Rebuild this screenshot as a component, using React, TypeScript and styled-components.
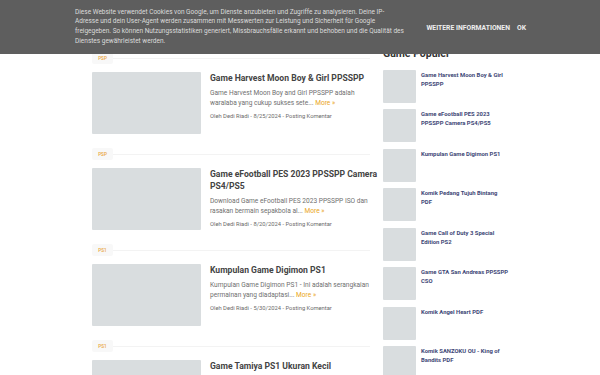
import React from 'react';
import styled, { createGlobalStyle } from 'styled-components';

const GlobalStyle = createGlobalStyle`
  html, body {
    margin: 0;
    padding: 0;
    background: #fff;
    font-family: Roboto, "Liberation Sans", sans-serif;
    overflow: hidden;
  }
`;

const Page = styled.div`
  display: flex;
  gap: 5px;
  width: 423px;
  padding: 47px 0 0 92px;
`;

const Main = styled.main`
  width: 286px;
  padding-top: 5px;
`;

const Post = styled.article`
  margin-bottom: 14px;
`;

const TagRow = styled.div`
  display: flex;
  align-items: center;
  height: 12px;
  margin-bottom: 8px;

  &::after {
    content: '';
    flex: 1;
    height: 1px;
    margin-right: 8px;
    background: #f3f3f3;
  }
`;

const Tag = styled.span`
  display: inline-flex;
  align-items: center;
  justify-content: center;
  width: 21px;
  height: 12px;
  background: #f8f8f8;
  color: #e9a53c;
  font-size: 4.6px;
  font-weight: 500;
  border-radius: 2px;
`;

const PostBody = styled.div`
  display: flex;
  gap: 9px;
`;

const Thumb = styled.div<{ $size?: 'big' | 'small' }>`
  flex: none;
  width: ${(p) => (p.$size === 'small' ? '33px' : '109px')};
  height: ${(p) => (p.$size === 'small' ? '33px' : '62px')};
  background: #d9dddf;
  border-radius: 1px;
`;

const PostText = styled.div`
  flex: 1;
  min-width: 0;
`;

const PostTitle = styled.h2`
  margin: 0 0 4px;
  font-size: 8.6px;
  line-height: 12px;
  font-weight: 700;
  color: #444;
`;

const Snippet = styled.p`
  margin: 0 0 4px;
  padding-right: 8px;
  font-size: 6.6px;
  line-height: 10px;
  color: #6f6f6f;
`;

const More = styled.a`
  color: #eaa520;
  text-decoration: none;
`;

const Meta = styled.div`
  font-size: 5.8px;
  line-height: 9px;
  color: #6a6a6a;
`;

const Sidebar = styled.aside`
  width: 132px;
`;

const SideHeading = styled.h3`
  margin: 0 0 8.5px;
  font-size: 10.5px;
  line-height: 14px;
  font-weight: 700;
  color: #333;
`;

const PopularItem = styled.div`
  display: flex;
  gap: 5px;
  margin-bottom: 6.5px;
`;

const PopularTitle = styled.a`
  width: 87.5px;
  padding-top: 1px;
  font-size: 5.9px;
  line-height: 9px;
  font-weight: 700;
  color: #3e4776;
  text-decoration: none;
`;

const CookieBar = styled.div`
  position: fixed;
  top: 0;
  left: 0;
  right: 0;
  height: 54px;
  display: flex;
  align-items: center;
  justify-content: space-between;
  padding: 0 74px 0 75px;
  background: #5e5e5e;
  box-sizing: border-box;
`;

const CookieText = styled.p`
  width: 330px;
  margin: 0;
  font-size: 6.5px;
  line-height: 9.6px;
  color: #dcdcdc;
`;

const CookieActions = styled.div`
  display: flex;
  gap: 7px;
  padding-top: 1px;
`;

const CookieButton = styled.span`
  font-size: 6.8px;
  font-weight: 700;
  color: #eee;
`;

const posts = [
  {
    tag: 'PSP',
    title: 'Game Harvest Moon Boy & Girl PPSSPP',
    snippet: 'Game Harvest Moon Boy and Girl PPSSPP adalah waralaba yang cukup sukses sete...',
    date: '8/25/2024',
  },
  {
    tag: 'PSP',
    title: 'Game eFootball PES 2023 PPSSPP Camera PS4/PS5',
    snippet: 'Download Game eFootball PES 2023 PPSSPP ISO dan rasakan bermain sepakbola al...',
    date: '8/20/2024',
  },
  {
    tag: 'PS1',
    title: 'Kumpulan Game Digimon PS1',
    snippet: 'Kumpulan Game Digimon PS1 - Ini adalah serangkaian permainan yang diadaptasi...',
    date: '5/30/2024',
  },
  {
    tag: 'PS1',
    title: 'Game Tamiya PS1 Ukuran Kecil',
    snippet: 'Game Tamiya PS1 Ukuran Kecil merupakan game balap mobil mini yang cukup popu...',
    date: '5/21/2024',
  },
];

const popular = [
  'Game Harvest Moon Boy & Girl PPSSPP',
  'Game eFootball PES 2023 PPSSPP Camera PS4/PS5',
  'Kumpulan Game Digimon PS1',
  'Komik Pedang Tujuh Bintang PDF',
  'Game Call of Duty 3 Special Edition PS2',
  'Game GTA San Andreas PPSSPP CSO',
  'Komik Angel Heart PDF',
  'Komik SANZOKU OU - King of Bandits PDF',
];

export default function App() {
  return (
    <>
      <GlobalStyle />
      <Page>
        <Main>
          {posts.map((post) => (
            <Post key={post.title}>
              <TagRow>
                <Tag>{post.tag}</Tag>
              </TagRow>
              <PostBody>
                <Thumb />
                <PostText>
                  <PostTitle>{post.title}</PostTitle>
                  <Snippet>
                    {post.snippet} <More href="#">More »</More>
                  </Snippet>
                  <Meta>Oleh Dedi Riadi - {post.date} - Posting Komentar</Meta>
                </PostText>
              </PostBody>
            </Post>
          ))}
        </Main>
        <Sidebar>
          <SideHeading>Game Populer</SideHeading>
          {popular.map((title) => (
            <PopularItem key={title}>
              <Thumb $size="small" />
              <PopularTitle href="#">{title}</PopularTitle>
            </PopularItem>
          ))}
        </Sidebar>
      </Page>
      <CookieBar>
        <CookieText>
          Diese Website verwendet Cookies von Google, um Dienste anzubieten und Zugriffe zu
          analysieren. Deine IP-Adresse und dein User-Agent werden zusammen mit Messwerten zur
          Leistung und Sicherheit für Google freigegeben. So können Nutzungsstatistiken generiert,
          Missbrauchsfälle erkannt und behoben und die Qualität des Dienstes gewährleistet werden.
        </CookieText>
        <CookieActions>
          <CookieButton>WEITERE INFORMATIONEN</CookieButton>
          <CookieButton>OK</CookieButton>
        </CookieActions>
      </CookieBar>
    </>
  );
}
